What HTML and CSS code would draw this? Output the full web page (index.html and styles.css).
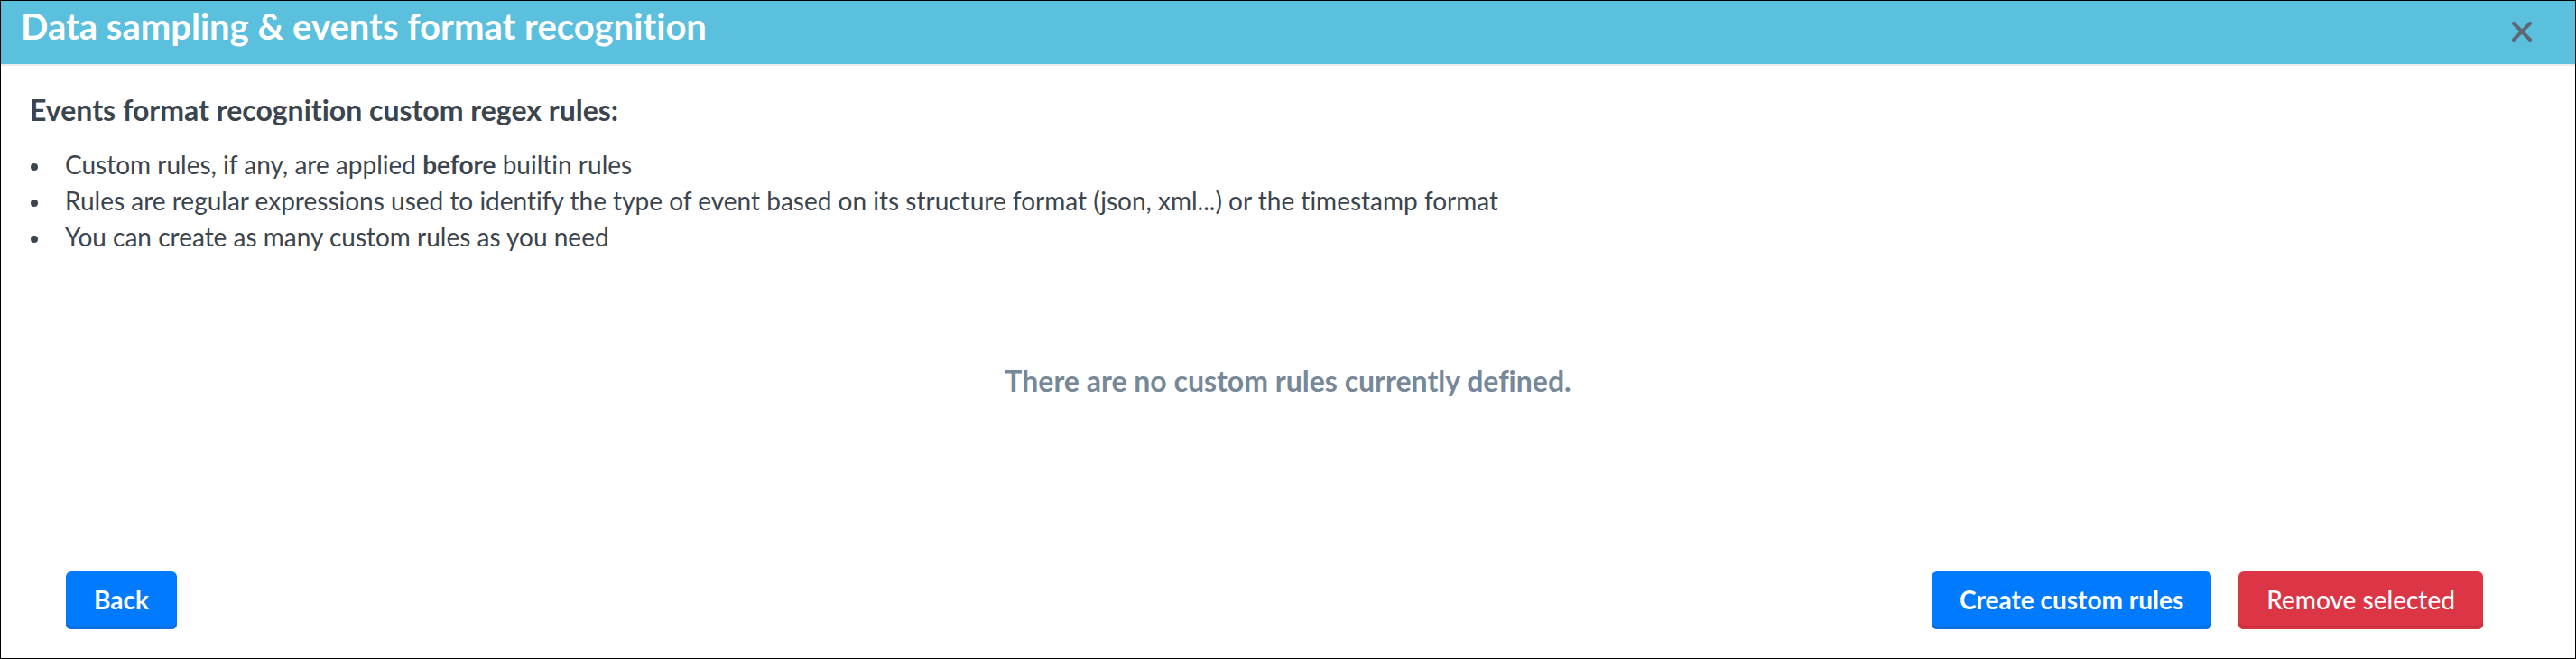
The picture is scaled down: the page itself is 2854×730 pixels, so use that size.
FILE: index.html
```
<!DOCTYPE html>
<html lang="en">
<head>
<meta charset="utf-8">
<title>Data sampling &amp; events format recognition</title>
<link rel="stylesheet" href="styles.css">
</head>
<body>
<main class="modal" role="dialog" aria-labelledby="modal-title">
  <header class="modal-header">
    <h1 class="modal-title" id="modal-title">Data sampling &amp; events format recognition</h1>
    <button class="close" type="button" aria-label="Close">
      <svg class="close-icon" viewBox="0 0 22 22" aria-hidden="true"><path d="M2 2 20 20M20 2 2 20"/></svg>
    </button>
  </header>
  <section class="modal-body">
    <h2 class="rules-heading">Events format recognition custom regex rules:</h2>
    <ul class="rules-list">
      <li>Custom rules, if any, are applied <strong>before</strong> builtin rules</li>
      <li>Rules are regular expressions used to identify the type of event based on its structure format (json, xml...) or the timestamp format</li>
      <li>You can create as many custom rules as you need</li>
    </ul>
    <p class="empty">There are no custom rules currently defined.</p>
  </section>
  <footer class="modal-footer">
    <button class="btn btn-primary" type="button">Back</button>
    <div class="actions">
      <button class="btn btn-primary" type="button">Create custom rules</button>
      <button class="btn btn-danger" type="button">Remove selected</button>
    </div>
  </footer>
</main>
</body>
</html>
```
FILE: styles.css
```
* {
  box-sizing: border-box;
}

body {
  margin: 0;
  font-family: Lato, "Liberation Sans", sans-serif;
  font-size: 28px;
  font-variant-ligatures: none;
  line-height: 40px;
  color: #3c444d;
  background: #fff;
}

.modal {
  display: flex;
  flex-direction: column;
  min-height: 100vh;
  border: 1px solid #000;
}

.modal-header {
  display: flex;
  justify-content: space-between;
  align-items: flex-start;
  padding: 4px 38px 15px 22px;
  background: #5bc0de;
  border-bottom: 2px solid #e9ecef;
}

.modal-title {
  margin: 0;
  font-size: 40px;
  line-height: 48px;
  font-weight: 700;
  color: #fff;
}

.close {
  display: flex;
  margin-top: 9px;
  padding: 10px;
  border: 0;
  background: none;
  cursor: pointer;
}

.close-icon {
  width: 22px;
  height: 22px;
  fill: none;
  stroke: #5c6773;
  stroke-width: 4;
  stroke-linecap: round;
}

.modal-body {
  flex: 1;
  padding: 29px 32px 0;
}

.rules-heading {
  margin: 0 0 20px;
  font-size: 32px;
  line-height: 40px;
  font-weight: 700;
}

.rules-list {
  margin: 0;
  padding: 0;
  list-style: none;
}

.rules-list li {
  position: relative;
  padding-left: 39px;
}

.rules-list li::before {
  content: "";
  position: absolute;
  left: 1px;
  top: 19px;
  width: 8px;
  height: 8px;
  border-radius: 50%;
  background: currentColor;
}

.empty {
  margin: 120px 0 0;
  font-size: 32px;
  line-height: 40px;
  font-weight: 700;
  text-align: center;
  color: #778899;
}

.modal-footer {
  display: flex;
  justify-content: space-between;
  padding: 0 102px 32px 72px;
}

.actions {
  display: flex;
  gap: 30px;
}

.btn {
  padding: 11px 31px 13px;
  border: 0;
  border-radius: 6px;
  font-family: inherit;
  font-size: 28px;
  font-variant-ligatures: inherit;
  line-height: 40px;
  font-weight: 700;
  color: #fff;
  cursor: pointer;
}

.btn-primary {
  background: #007bff;
  box-shadow: inset 0 -4px #0a6fe0;
}

.btn-danger {
  font-weight: 500;
  background: #dc3545;
  box-shadow: inset 0 -2px #d63343, inset 0 -4px #c82f3e;
}
```
